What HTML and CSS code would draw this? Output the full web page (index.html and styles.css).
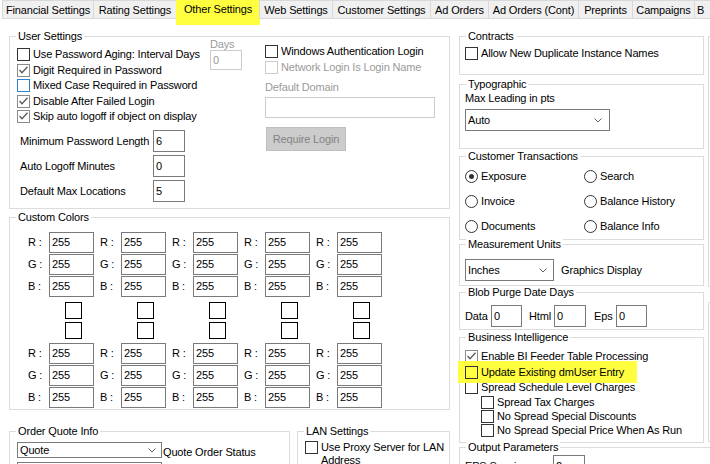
FILE: index.html
```html
<!DOCTYPE html>
<html>
<head>
<meta charset="utf-8">
<title>Other Settings</title>
<link rel="stylesheet" href="styles.css">
</head>
<body>
<div class="tabs">
  <div class="tab t1">Financial Settings</div>
  <div class="tab t2">Rating Settings</div>
  <div class="tab active t3">Other Settings</div>
  <div class="tab t4">Web Settings</div>
  <div class="tab t5">Customer Settings</div>
  <div class="tab t6">Ad Orders</div>
  <div class="tab t7">Ad Orders (Cont)</div>
  <div class="tab t8">Preprints</div>
  <div class="tab t9">Campaigns</div>
  <div class="tab t10">B</div>
</div>

<div class="page">
  <div class="col-left">
    <div class="group g-user">
      <div class="legend">User Settings</div>
      <div class="us-body">
        <div class="us-left">
          <div class="us-top">
            <div class="cb-list">
              <div class="row"><span class="cb"></span><span>Use Password Aging: Interval Days</span></div>
              <div class="row"><span class="cb checked"><svg viewBox="0 0 11 11" width="11" height="11"><path d="M1.5 5 L4 7.8 L9.5 1.8"/></svg></span><span>Digit Required in Password</span></div>
              <div class="row"><span class="cb focus"></span><span>Mixed Case Required in Password</span></div>
              <div class="row"><span class="cb checked"><svg viewBox="0 0 11 11" width="11" height="11"><path d="M1.5 5 L4 7.8 L9.5 1.8"/></svg></span><span>Disable After Failed Login</span></div>
              <div class="row"><span class="cb checked"><svg viewBox="0 0 11 11" width="11" height="11"><path d="M1.5 5 L4 7.8 L9.5 1.8"/></svg></span><span>Skip auto logoff if object on display</span></div>
            </div>
            <div class="days">
              <div class="days-label">Days</div>
              <div class="input disabled days-input">0</div>
            </div>
          </div>
          <div class="spins">
            <div class="spin-row"><span class="spin-label">Minimum Password Length</span><span class="input spin-input">6</span></div>
            <div class="spin-row"><span class="spin-label">Auto Logoff Minutes</span><span class="input spin-input">0</span></div>
            <div class="spin-row"><span class="spin-label">Default Max Locations</span><span class="input spin-input">5</span></div>
          </div>
        </div>
        <div class="us-right">
          <div class="row"><span class="cb"></span><span>Windows Authentication Login</span></div>
          <div class="row dis"><span class="cb off"></span><span>Network Login Is Login Name</span></div>
          <div class="dd-label dis">Default Domain</div>
          <div class="input disabled dd-input"></div>
          <div class="btn">Require Login</div>
        </div>
      </div>
    </div>

    <div class="group g-colors">
      <div class="legend">Custom Colors</div>
      <div class="cc-grid">
        <div class="cc-col">
          <div class="rgb"><span class="rgb-l">R :</span><span class="input cc-in">255</span></div>
          <div class="rgb"><span class="rgb-l">G :</span><span class="input cc-in">255</span></div>
          <div class="rgb"><span class="rgb-l">B :</span><span class="input cc-in">255</span></div>
          <div class="swatches"><span class="sw"></span><span class="sw"></span></div>
          <div class="rgb"><span class="rgb-l">R :</span><span class="input cc-in">255</span></div>
          <div class="rgb"><span class="rgb-l">G :</span><span class="input cc-in">255</span></div>
          <div class="rgb"><span class="rgb-l">B :</span><span class="input cc-in">255</span></div>
        </div>
        <div class="cc-col">
          <div class="rgb"><span class="rgb-l">R :</span><span class="input cc-in">255</span></div>
          <div class="rgb"><span class="rgb-l">G :</span><span class="input cc-in">255</span></div>
          <div class="rgb"><span class="rgb-l">B :</span><span class="input cc-in">255</span></div>
          <div class="swatches"><span class="sw"></span><span class="sw"></span></div>
          <div class="rgb"><span class="rgb-l">R :</span><span class="input cc-in">255</span></div>
          <div class="rgb"><span class="rgb-l">G :</span><span class="input cc-in">255</span></div>
          <div class="rgb"><span class="rgb-l">B :</span><span class="input cc-in">255</span></div>
        </div>
        <div class="cc-col">
          <div class="rgb"><span class="rgb-l">R :</span><span class="input cc-in">255</span></div>
          <div class="rgb"><span class="rgb-l">G :</span><span class="input cc-in">255</span></div>
          <div class="rgb"><span class="rgb-l">B :</span><span class="input cc-in">255</span></div>
          <div class="swatches"><span class="sw"></span><span class="sw"></span></div>
          <div class="rgb"><span class="rgb-l">R :</span><span class="input cc-in">255</span></div>
          <div class="rgb"><span class="rgb-l">G :</span><span class="input cc-in">255</span></div>
          <div class="rgb"><span class="rgb-l">B :</span><span class="input cc-in">255</span></div>
        </div>
        <div class="cc-col">
          <div class="rgb"><span class="rgb-l">R :</span><span class="input cc-in">255</span></div>
          <div class="rgb"><span class="rgb-l">G :</span><span class="input cc-in">255</span></div>
          <div class="rgb"><span class="rgb-l">B :</span><span class="input cc-in">255</span></div>
          <div class="swatches"><span class="sw"></span><span class="sw"></span></div>
          <div class="rgb"><span class="rgb-l">R :</span><span class="input cc-in">255</span></div>
          <div class="rgb"><span class="rgb-l">G :</span><span class="input cc-in">255</span></div>
          <div class="rgb"><span class="rgb-l">B :</span><span class="input cc-in">255</span></div>
        </div>
        <div class="cc-col">
          <div class="rgb"><span class="rgb-l">R :</span><span class="input cc-in">255</span></div>
          <div class="rgb"><span class="rgb-l">G :</span><span class="input cc-in">255</span></div>
          <div class="rgb"><span class="rgb-l">B :</span><span class="input cc-in">255</span></div>
          <div class="swatches"><span class="sw"></span><span class="sw"></span></div>
          <div class="rgb"><span class="rgb-l">R :</span><span class="input cc-in">255</span></div>
          <div class="rgb"><span class="rgb-l">G :</span><span class="input cc-in">255</span></div>
          <div class="rgb"><span class="rgb-l">B :</span><span class="input cc-in">255</span></div>
        </div>
      </div>
    </div>

    <div class="bottom-row">
      <div class="group g-order">
        <div class="legend">Order Quote Info</div>
        <div class="order-body">
          <div class="order-row">
            <div class="select sel-quote"><span>Quote</span><svg class="chev" viewBox="0 0 8 5" width="8" height="5"><path d="M0.5 0.5 L4 4 L7.5 0.5"/></svg></div>
            <span class="oq-label">Quote Order Status</span>
          </div>
          <div class="select sel-next"></div>
        </div>
      </div>
      <div class="group g-lan">
        <div class="legend">LAN Settings</div>
        <div class="lan-body">
          <div class="row wrap"><span class="cb"></span><span class="lan-text">Use Proxy Server for LAN Address</span></div>
        </div>
      </div>
    </div>
  </div>

  <div class="col-right">
    <div class="group g-contracts">
      <div class="legend">Contracts</div>
      <div class="r-body pt9">
        <div class="row"><span class="cb"></span><span>Allow New Duplicate Instance Names</span></div>
      </div>
    </div>

    <div class="group g-typo">
      <div class="legend">Typographic</div>
      <div class="r-body pt7">
        <div class="lbl">Max Leading in pts</div>
        <div class="select sel-auto"><span>Auto</span><svg class="chev" viewBox="0 0 8 5" width="8" height="5"><path d="M0.5 0.5 L4 4 L7.5 0.5"/></svg></div>
      </div>
    </div>

    <div class="group g-trans">
      <div class="legend">Customer Transactions</div>
      <div class="r-body radios">
        <div class="rrow"><span class="rb on"></span><span>Exposure</span></div>
        <div class="rrow"><span class="rb"></span><span>Search</span></div>
        <div class="rrow"><span class="rb"></span><span>Invoice</span></div>
        <div class="rrow"><span class="rb"></span><span>Balance History</span></div>
        <div class="rrow"><span class="rb"></span><span>Documents</span></div>
        <div class="rrow"><span class="rb"></span><span>Balance Info</span></div>
      </div>
    </div>

    <div class="group g-meas">
      <div class="legend">Measurement Units</div>
      <div class="r-body meas-row">
        <div class="select sel-inches"><span>Inches</span><svg class="chev" viewBox="0 0 8 5" width="8" height="5"><path d="M0.5 0.5 L4 4 L7.5 0.5"/></svg></div>
        <span class="gd">Graphics Display</span>
      </div>
    </div>

    <div class="group g-blob">
      <div class="legend">Blob Purge Date Days</div>
      <div class="r-body blob-row">
        <span class="bl bl-data">Data</span><span class="input bi-data">0</span>
        <span class="bl bl-html">Html</span><span class="input bi-html">0</span>
        <span class="bl bl-eps">Eps</span><span class="input bi-eps">0</span>
      </div>
    </div>

    <div class="group g-bi">
      <div class="legend">Business Intelligence</div>
      <div class="r-body bi-body">
        <div class="row"><span class="cb checked"><svg viewBox="0 0 11 11" width="11" height="11"><path d="M1.5 5 L4 7.8 L9.5 1.8"/></svg></span><span>Enable BI Feeder Table Processing</span></div>
        <div class="row marked"><span class="cb"></span><span>Update Existing dmUser Entry</span></div>
        <div class="row"><span class="cb"></span><span>Spread Schedule Level Charges</span></div>
        <div class="row sub"><span class="cb"></span><span>Spread Tax Charges</span></div>
        <div class="row sub"><span class="cb"></span><span>No Spread Special Discounts</span></div>
        <div class="row sub"><span class="cb"></span><span>No Spread Special Price When As Run</span></div>
      </div>
    </div>

    <div class="group g-output">
      <div class="legend">Output Parameters</div>
      <div class="r-body out-row">
        <span class="out-label">EPS Spacing</span><span class="input out-in">2</span>
      </div>
    </div>
  </div>

  <div class="col-extra">
    <div class="group ex1"></div>
    <div class="group ex2"></div>
  </div>
</div>
</body>
</html>
```

FILE: styles.css
```css
* { box-sizing: border-box; }
html, body { margin: 0; padding: 0; }
body {
  width: 710px;
  height: 464px;
  overflow: hidden;
  background: #fff;
  color: #000;
  font-family: "Liberation Sans", Arial, sans-serif;
  font-size: 11px;
  letter-spacing: -0.15px;
  line-height: 13px;
}

/* Tabs */
.tabs {
  display: flex;
  align-items: flex-start;
  height: 19px;
  padding-left: 2px;
  position: relative;
  z-index: 2;
}
.tab {
  flex: none;
  height: 19px;
  margin-left: -1px;
  border: 1px solid #d9d9d9;
  background: #f0f0f0;
  text-align: center;
  line-height: 17px;
  padding-top: 1px;
  white-space: nowrap;
  overflow: hidden;
}
.tab:first-child { margin-left: 0; }
.tab.active {
  height: 25px;
  border: none;
  background: #ffff40;
  padding-top: 0;
  line-height: 18px;
}
.t1 { width: 92px; }
.t2 { width: 84px; }
.t3 { width: 84px; }
.t4 { width: 74px; }
.t5 { width: 99px; }
.t6 { width: 59px; }
.t7 { width: 91px; }
.t8 { width: 55px; }
.t9 { width: 63px; }
.t10 { width: 30px; text-align: left; padding-left: 2px; }

/* Page columns */
.page {
  display: flex;
  align-items: flex-start;
  padding: 17px 0 0 9px;
}
.col-left { flex: none; width: 441px; }
.col-right { flex: none; width: 245px; margin-left: 9px; }
.col-extra { flex: none; width: 40px; margin-left: 4px; }

/* Group boxes */
.group {
  border: 1px solid #dcdcdc;
  position: relative;
}
.legend {
  display: block;
  width: max-content;
  margin: -7px 0 -6px 6px;
  padding: 0 2px;
  background: #fff;
  line-height: 13px;
  white-space: nowrap;
}

/* Common controls */
.row {
  display: flex;
  align-items: center;
  height: 15.5px;
  white-space: nowrap;
}
.cb {
  flex: none;
  display: inline-flex;
  align-items: center;
  justify-content: center;
  width: 13px;
  height: 13px;
  border: 1px solid #333;
  margin-right: 3px;
}
.cb svg path { fill: none; stroke: #5a5a5a; stroke-width: 1.3; }
.cb.checked { border-color: #8a8a8a; }
.cb.focus { border-color: #2f80d0; }
.cb.off { border-color: #cccccc; }
.dis { color: #9a9a9a; }

.rb {
  flex: none;
  display: inline-flex;
  align-items: center;
  justify-content: center;
  width: 13px;
  height: 13px;
  border: 1px solid #333;
  border-radius: 50%;
  margin-right: 3px;
}
.rb.on::after {
  content: "";
  width: 5px;
  height: 5px;
  border-radius: 50%;
  background: #333;
}

.input {
  display: block;
  flex: none;
  border: 1px solid #7a7a7a;
  background: #fff;
  padding-left: 2px;
  white-space: nowrap;
}
.input.disabled { border-color: #cccccc; color: #9a9a9a; }

.select {
  display: flex;
  align-items: center;
  justify-content: space-between;
  border: 1px solid #7a7a7a;
  background: #fff;
  padding: 0 6px 0 2px;
}
.chev path { fill: none; stroke: #606060; stroke-width: 1; }

/* User Settings */
.g-user { height: 173px; }
.us-body { display: flex; padding-left: 7px; }
.us-left { width: 225px; flex: none; }
.us-top { display: flex; }
.cb-list { width: 193px; padding-top: 10px; }
.days { width: 32px; }
.days-label { color: #9a9a9a; line-height: 11px; margin-top: 2px; }
.days-input { width: 32px; height: 20px; line-height: 18px; }
.spins { margin-top: 5.5px; display: flex; flex-direction: column; gap: 3px; }
.spin-row { display: flex; align-items: center; }
.spin-label { width: 133px; margin-left: 3px; white-space: nowrap; }
.spin-input { width: 32px; height: 22px; line-height: 20px; }
.us-right { margin-left: 23px; padding-top: 7px; }
.dd-label { margin-top: 6px; line-height: 13px; }
.dd-input { margin-top: 3px; width: 170px; height: 21px; }
.btn {
  margin: 9px 0 0 1px;
  width: 80px;
  height: 24px;
  background: #cccccc;
  border: 1px solid #bfbfbf;
  color: #838383;
  text-align: center;
  line-height: 22px;
}

/* Custom Colors */
.g-colors { margin-top: 8px; height: 193px; }
.cc-grid { display: flex; gap: 6px; padding: 14px 0 0 18px; }
.cc-col { width: 66px; display: flex; flex-direction: column; gap: 1px; }
.rgb { display: flex; align-items: center; height: 21px; }
.rgb-l { width: 21px; white-space: nowrap; }
.cc-in { width: 45px; height: 21px; line-height: 19px; }
.swatches {
  display: flex;
  flex-direction: column;
  gap: 3px;
  margin: 4px 0 3px 37px;
}
.sw { display: block; width: 17px; height: 17px; border: 1px solid #000; }

/* Bottom row */
.bottom-row { display: flex; margin-top: 21px; }
.g-order { width: 281px; height: 60px; }
.g-lan { width: 153px; height: 60px; margin-left: 7px; }
.order-body { padding: 10px 0 0 7px; }
.order-row { display: flex; align-items: flex-start; }
.sel-quote { width: 145px; height: 16px; padding-right: 5px; }
.oq-label { margin-left: 1px; padding-top: 4px; white-space: nowrap; }
.sel-next { width: 145px; height: 21px; margin-top: 3px; }
.lan-body { padding: 9px 0 0 7px; }
.row.wrap { align-items: flex-start; height: auto; white-space: normal; }
.lan-text { width: 124px; line-height: 13px; }

/* Right column */
.r-body { padding-left: 5px; }
.pt9 { padding-top: 9px; }
.pt7 { padding-top: 7px; }
.g-contracts { height: 39px; }
.g-typo { height: 65px; margin-top: 9px; }
.lbl { line-height: 13px; }
.sel-auto { width: 145px; height: 22px; margin-top: 4px; padding-right: 7px; }

.g-trans { height: 84px; margin-top: 7px; }
.radios {
  display: grid;
  grid-template-columns: 119px auto;
  grid-auto-rows: 25px;
  padding-top: 6.5px;
}
.rrow { display: flex; align-items: center; white-space: nowrap; }

.g-meas { height: 42px; margin-top: 4px; }
.meas-row { display: flex; align-items: center; padding-top: 14px; }
.sel-inches { width: 89px; height: 22px; }
.gd { margin-left: 7px; white-space: nowrap; }

.g-blob { height: 38px; margin-top: 6px; }
.blob-row { display: flex; align-items: center; padding-top: 12px; }
.bl { white-space: nowrap; }
.bl-data { width: 26px; }
.bl-html { width: 25px; margin-left: 7px; }
.bl-eps { width: 22px; margin-left: 8px; }
.bi-data, .bi-html, .bi-eps { height: 22px; line-height: 20px; }
.bi-data { width: 31px; }
.bi-html { width: 32px; }
.bi-eps { width: 31px; }

.g-bi { height: 106px; margin-top: 7px; }
.bi-body { padding-top: 11px; }
.row.sub { height: 14px; padding-left: 16px; }
.row.marked { position: relative; }
.row.marked::before {
  content: "";
  position: absolute;
  left: -7px;
  top: -3.5px;
  width: 179px;
  height: 22px;
  background: #ffff40;
}
.row.marked > span { position: relative; }

.g-output { width: 280px; height: 50px; margin-top: 4px; }
.out-row { display: flex; align-items: center; padding-top: 7px; }
.out-label { width: 88px; white-space: nowrap; }
.out-in { width: 32px; height: 22px; line-height: 20px; }

/* Extra column edge */
.ex1 { height: 251px; }
.ex2 { height: 140px; margin-top: 15px; }
```
